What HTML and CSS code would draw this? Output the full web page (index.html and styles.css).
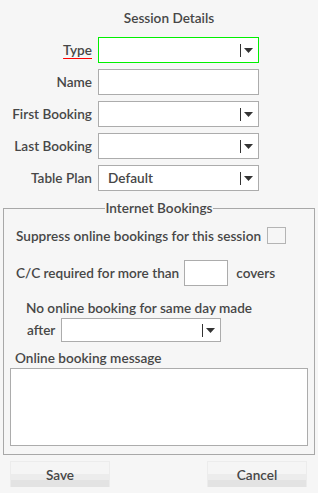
FILE: index.html
```html
<!DOCTYPE html>
<html lang="en">
<head>
<meta charset="utf-8">
<title>Session Details</title>
<link rel="stylesheet" href="styles.css">
</head>
<body>
<div class="dialog">
  <div class="title">Session Details</div>
  <div class="form-grid">
    <label class="lbl required">Type</label>
    <div class="select focused"><span class="val"></span><span class="sep"></span><svg class="tri" width="9" height="5" viewBox="0 0 9 5"><polygon points="0,0 9,0 4.5,5" /></svg></div>
    <label class="lbl">Name</label>
    <div class="input"></div>
    <label class="lbl">First Booking</label>
    <div class="select"><span class="val"></span><span class="sep"></span><svg class="tri" width="9" height="5" viewBox="0 0 9 5"><polygon points="0,0 9,0 4.5,5" /></svg></div>
    <label class="lbl">Last Booking</label>
    <div class="select"><span class="val"></span><span class="sep"></span><svg class="tri" width="9" height="5" viewBox="0 0 9 5"><polygon points="0,0 9,0 4.5,5" /></svg></div>
    <label class="lbl">Table Plan</label>
    <div class="select"><span class="val">Default</span><span class="sep"></span><svg class="tri" width="9" height="5" viewBox="0 0 9 5"><polygon points="0,0 9,0 4.5,5" /></svg></div>
  </div>
  <fieldset class="internet">
    <legend>Internet Bookings</legend>
    <div class="suppress"><span>Suppress online bookings for this session</span><span class="checkbox"></span></div>
    <div class="cc"><span>C/C required for more than</span><span class="input covers-input"></span><span class="covers">covers</span></div>
    <div class="sameday">No online booking for same day made</div>
    <div class="after-row"><span>after</span><div class="select small"><span class="val"></span><span class="sep"></span><svg class="tri" width="9" height="5" viewBox="0 0 9 5"><polygon points="0,0 9,0 4.5,5" /></svg></div></div>
    <div class="msg-label">Online booking message</div>
    <div class="textarea"></div>
  </fieldset>
  <div class="buttons">
    <button class="btn">Save</button>
    <button class="btn">Cancel</button>
  </div>
</div>
</body>
</html>
```
FILE: styles.css
```css
html, body {
  margin: 0;
  padding: 0;
  background: #f6f6f6;
}
body {
  width: 318px;
  height: 493px;
  font-family: "Lato", "Liberation Sans", sans-serif;
  font-weight: 600;
  font-size: 13.6px;
  color: #474747;
  line-height: 16px;
}
.dialog {
  display: flex;
  flex-direction: column;
}
.title {
  margin: 10px 0 11px;
  padding-left: 20px;
  text-align: center;
}
.form-grid {
  display: grid;
  grid-template-columns: 92px 161px;
  grid-auto-rows: 26px;
  column-gap: 6px;
  row-gap: 6px;
}
.lbl {
  display: flex;
  align-items: center;
  justify-content: flex-end;
  white-space: nowrap;
}
.lbl.required {
  text-decoration: underline;
  text-decoration-color: #ff0000;
  text-decoration-thickness: 1px;
  text-underline-offset: 3px;
}
.input, .select {
  box-sizing: border-box;
  background: #ffffff;
  border: 1px solid #acacac;
}
.select {
  display: flex;
  align-items: center;
  padding: 0 5px 0 9px;
  gap: 3px;
}
.select.focused {
  border-color: #00f000;
}
.select .val {
  flex: 1;
}
.sep {
  width: 1px;
  height: 13px;
  background: #333333;
}
.tri {
  display: block;
  fill: #333333;
}
.internet {
  margin: 9px 3px 0;
  padding: 0 6px 8px;
  border: 1px solid #a8a8a8;
  min-width: 0;
}
.internet legend {
  margin: 0 auto;
  padding: 0;
  line-height: 16px;
}
.suppress {
  display: flex;
  align-items: center;
  gap: 6px;
  margin: 11px 0 0 6px;
  height: 17px;
}
.checkbox {
  box-sizing: border-box;
  width: 19px;
  height: 17px;
  border: 1px solid #b4b4b4;
}
.cc {
  display: flex;
  align-items: center;
  margin: 16px 0 0 6px;
  height: 26px;
}
.covers-input {
  width: 44px;
  height: 26px;
  margin-left: 5px;
}
.covers {
  margin-left: 8px;
}
.sameday {
  margin: 14px 0 0 16px;
}
.after-row {
  display: flex;
  align-items: center;
  margin: 2px 0 0 17px;
  gap: 6px;
}
.select.small {
  width: 160px;
  height: 24px;
  padding-right: 5px;
}
.msg-label {
  margin: 8px 0 0 5px;
}
.textarea {
  box-sizing: border-box;
  height: 78px;
  margin-top: 2px;
  background: #ffffff;
  border: 1px solid #acacac;
}
.buttons {
  display: flex;
  justify-content: space-between;
  padding: 0 11px 0 10px;
  margin-top: 6px;
}
.btn {
  box-sizing: border-box;
  width: 100px;
  height: 26px;
  border: 1px solid #ececec;
  border-bottom: none;
  background: linear-gradient(to bottom, #f5f5f5 0%, #f5f5f5 48%, #ececec 50%, #ececec 72%, #e3e3e3 74%, #e3e3e3 100%);
  font-family: "Lato", "Liberation Sans", sans-serif;
  font-weight: 600;
  font-size: 13.6px;
  color: #474747;
  padding: 0;
}
```
